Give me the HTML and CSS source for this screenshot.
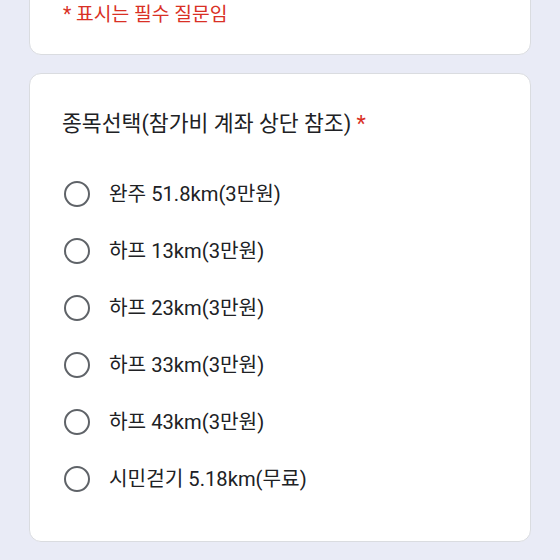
FILE: index.html
```html
<!DOCTYPE html>
<html lang="ko">
<head>
<meta charset="utf-8">
<link rel="stylesheet" href="styles.css">
</head>
<body>
<div class="page">
  <div class="card card-head">
    <div class="notice">* 표시는 필수 질문임</div>
  </div>
  <div class="card card-question">
    <div class="title">종목선택(참가비 계좌 상단 참조) <span class="req">*</span></div>
    <div class="options">
      <div class="option"><span class="radio"></span><span class="label">완주 51.8km(3만원)</span></div>
      <div class="option"><span class="radio"></span><span class="label">하프 13km(3만원)</span></div>
      <div class="option"><span class="radio"></span><span class="label">하프 23km(3만원)</span></div>
      <div class="option"><span class="radio"></span><span class="label">하프 33km(3만원)</span></div>
      <div class="option"><span class="radio"></span><span class="label">하프 43km(3만원)</span></div>
      <div class="option"><span class="radio"></span><span class="label">시민걷기 5.18km(무료)</span></div>
    </div>
  </div>
</div>
</body>
</html>
```

FILE: styles.css
```css
* { box-sizing: border-box; }
html, body {
  margin: 0;
  padding: 0;
  background: #e9ebf6;
  overflow: hidden;
}
body {
  font-family: Roboto, "Noto Sans CJK KR", sans-serif;
  color: #202124;
}
.page {
  display: flex;
  flex-direction: column;
  gap: 18px;
  padding: 0 29px;
  margin-top: -20px;
}
.card {
  background: #fff;
  border: 1px solid #dadce0;
  border-radius: 12px;
}
.card-head {
  padding: 22px 32px 27px 33px;
}
.notice {
  color: #d93025;
  font-size: 19.3px;
  line-height: 24px;
}
.card-question {
  padding: 36px 32px 38px 32px;
}
.title {
  font-size: 21.6px;
  line-height: 28px;
}
.req {
  color: #d93025;
}
.options {
  margin-top: 32px;
  display: flex;
  flex-direction: column;
  gap: 9px;
}
.option {
  height: 48px;
  display: flex;
  align-items: center;
  padding-left: 2px;
  gap: 19px;
}
.radio {
  width: 26px;
  height: 26px;
  border: 2.5px solid #5f6368;
  border-radius: 50%;
  flex: none;
}
.label {
  font-size: 20.2px;
  line-height: 24px;
}
```
